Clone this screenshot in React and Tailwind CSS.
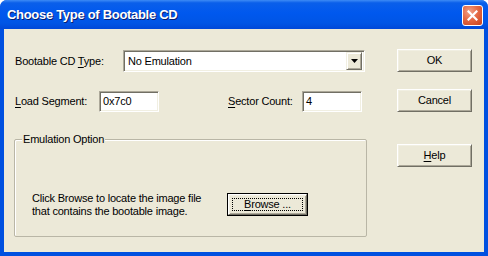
import React from "react";

const font = { fontFamily: '"Liberation Sans", Arial, sans-serif' };

function U({ children }) {
  return <span className="underline underline-offset-[2px] decoration-[1px]">{children}</span>;
}

function Sunken({ className = "", children }) {
  return (
    <div
      className={
        "bg-white border border-t-[#ACA899] border-l-[#ACA899] border-b-white border-r-white shadow-[inset_1px_1px_0_#716F64,inset_-1px_-1px_0_#F1EFE2] " +
        className
      }
    >
      {children}
    </div>
  );
}

function Btn({ children, className = "" }) {
  return (
    <button
      className={
        "w-[75px] h-[23px] bg-[#ECE9D8] border border-t-white border-l-white border-b-[#716F64] border-r-[#716F64] shadow-[inset_1px_1px_0_#F1EFE2,inset_-1px_-1px_0_#ACA899] text-[11px] tracking-[-0.2px] text-black flex items-center justify-center " +
        className
      }
    >
      {children}
    </button>
  );
}

export default function App() {
  return (
    <div className="w-[488px] h-[256px] bg-white" style={font}>
      <div className="w-[488px] h-[256px] flex flex-col rounded-t-[7px] overflow-hidden bg-[#0050E0]">
        <div className="h-[29px] flex items-center pl-[7px] pr-[5px] bg-[linear-gradient(to_bottom,#3D8BF5_0%,#0A5FEA_10%,#0058EE_45%,#0055E5_80%,#0048D8_100%)]">
          <span className="text-white font-bold text-[13px] tracking-[-0.3px] leading-none [text-shadow:1px_1px_0_#0A1E6E]">
            Choose Type of Bootable CD
          </span>
          <div className="ml-auto mt-[2px] w-[21px] h-[21px] rounded-[3px] border border-white bg-[radial-gradient(circle_at_35%_30%,#F0A28A_0%,#E56A45_45%,#C8401A_100%)] flex items-center justify-center">
            <svg width="11" height="11" viewBox="0 0 11 11">
              <path d="M1.5 1.5 L9.5 9.5 M9.5 1.5 L1.5 9.5" stroke="white" strokeWidth="2.2" strokeLinecap="square" />
            </svg>
          </div>
        </div>
        <div className="flex-1 mx-[4px] mb-[4px] bg-[#ECE9D8] flex pl-[10px] pt-[20px] text-[11px] tracking-[-0.2px] text-black">
          <div className="w-[353px] flex flex-col pt-[1px]">
            <div className="flex items-center h-[22px]">
              <span className="w-[109px] pl-[1px]">
                Bootable CD <U>T</U>ype:
              </span>
              <Sunken className="w-[242px] h-[22px] flex items-center pl-[4px] pr-[2px]">
                <span className="flex-1">No Emulation</span>
                <div className="w-[16px] h-[18px] bg-[#ECE9D8] border border-t-[#F1EFE2] border-l-[#F1EFE2] border-b-[#716F64] border-r-[#716F64] shadow-[inset_1px_1px_0_#FFFFFF,inset_-1px_-1px_0_#ACA899] flex items-center justify-center">
                  <svg width="7" height="4" viewBox="0 0 7 4">
                    <path d="M0 0 H7 L3.5 4 Z" fill="black" />
                  </svg>
                </div>
              </Sunken>
            </div>
            <div className="flex items-center h-[21px] mt-[19px]">
              <span className="w-[85px] pl-[1px]">
                <U>L</U>oad Segment:
              </span>
              <Sunken className="w-[60px] h-[21px] flex items-center pl-[3px]">0x7c0</Sunken>
              <span className="ml-[69px] w-[74px]">
                <U>S</U>ector Count:
              </span>
              <Sunken className="w-[60px] h-[21px] flex items-center pl-[3px]">4</Sunken>
            </div>
            <div className="mt-[27px] h-[98px] border border-[#B9B6A6] shadow-[inset_1px_1px_0_#FFFFFF] rounded-[2px] flex flex-col">
              <span className="-mt-[7px] ml-[7px] px-[1px] w-fit bg-[#ECE9D8] leading-[13px]">Emulation Option</span>
              <div className="flex items-center mt-[45px] pl-[17px]">
                <div className="w-[195px] leading-[13px] pt-[1px]">
                  Click Browse to locate the image file
                  <br />
                  that contains the bootable image.
                </div>
                <div className="border border-black">
                  <button className="w-[79px] h-[21px] bg-[#ECE9D8] border border-t-white border-l-white border-b-[#716F64] border-r-[#716F64] shadow-[inset_1px_1px_0_#F1EFE2,inset_-1px_-1px_0_#ACA899] p-[3px] flex">
                    <span className="flex-1 border border-dotted border-black flex items-center justify-center text-[11px] tracking-[-0.2px] leading-none">
                      <U>B</U>rowse ...
                    </span>
                  </button>
                </div>
              </div>
            </div>
          </div>
          <div className="ml-[30px] flex flex-col">
            <Btn>OK</Btn>
            <Btn className="mt-[17px]">Cancel</Btn>
            <Btn className="mt-[32px]">
              <U>H</U>elp
            </Btn>
          </div>
        </div>
      </div>
    </div>
  );
}
